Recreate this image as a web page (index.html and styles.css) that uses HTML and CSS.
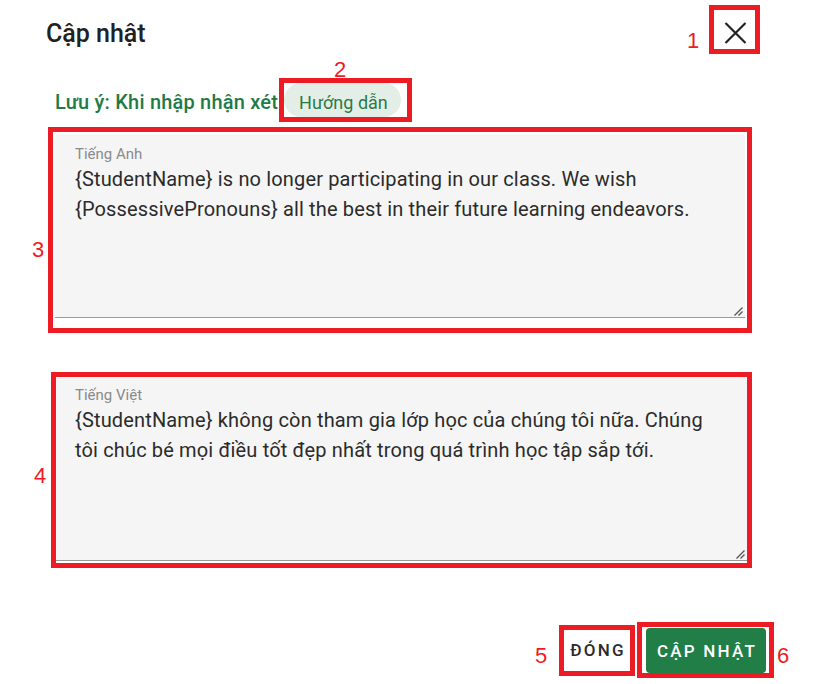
FILE: index.html
```html
<!DOCTYPE html>
<html lang="vi">
<head>
<meta charset="utf-8">
<title>Cập nhật</title>
<link rel="stylesheet" href="styles.css">
</head>
<body>
<div class="dialog">
  <div class="header">
    <h2 class="title">Cập nhật</h2>
    <div class="mark mark-close">
      <span class="num num-1">1</span>
      <button class="close-btn" aria-label="Đóng">
        <svg width="23" height="22" viewBox="0 0 23 22"><path d="M1.5 1 L21.5 21 M21.5 1 L1.5 21" stroke="#222" stroke-width="2.2" fill="none"/></svg>
      </button>
    </div>
  </div>

  <div class="note-row">
    <span class="note">Lưu ý: Khi nhập nhận xét</span>
    <div class="mark mark-chip">
      <span class="num num-2">2</span>
      <span class="chip">Hướng dẫn</span>
    </div>
  </div>

  <div class="mark mark-field mark-en">
    <span class="num num-3">3</span>
    <div class="field">
      <div class="field-label">Tiếng Anh</div>
      <div class="field-text">{StudentName} is no longer participating in our class. We wish {PossessivePronouns} all the best in their future learning endeavors.</div>
      <svg class="grip" width="10" height="10" viewBox="0 0 10 10"><path d="M9.5 1.5 L1.5 9.5 M9.5 5.5 L5.5 9.5" stroke="#555" stroke-width="1.3" fill="none"/></svg>
    </div>
  </div>

  <div class="mark mark-field mark-vi">
    <span class="num num-4">4</span>
    <div class="field">
      <div class="field-label">Tiếng Việt</div>
      <div class="field-text">{StudentName} không còn tham gia lớp học của chúng tôi nữa. Chúng tôi chúc bé mọi điều tốt đẹp nhất trong quá trình học tập sắp tới.</div>
      <svg class="grip" width="10" height="10" viewBox="0 0 10 10"><path d="M9.5 1.5 L1.5 9.5 M9.5 5.5 L5.5 9.5" stroke="#555" stroke-width="1.3" fill="none"/></svg>
    </div>
  </div>

  <div class="actions">
    <div class="mark mark-cancel">
      <span class="num num-5">5</span>
      <button class="btn btn-text">ĐÓNG</button>
    </div>
    <div class="mark mark-submit">
      <span class="num num-6">6</span>
      <button class="btn btn-primary">CẬP NHẬT</button>
    </div>
  </div>
</div>
</body>
</html>
```

FILE: styles.css
```css
* { box-sizing: border-box; }

html, body {
  margin: 0;
  padding: 0;
  background: #ffffff;
}

body {
  font-family: Roboto, "Noto Sans", Arial, sans-serif;
  color: #2b2b2b;
}

.dialog {
  width: 819px;
  height: 684px;
  padding-top: 5px;
  overflow: hidden;
}

/* annotation boxes */
.mark {
  position: relative;
  border: 5px solid #ed1c24;
}

.num {
  position: absolute;
  font-family: "Liberation Sans", Arial, sans-serif;
  font-size: 22px;
  line-height: 22px;
  color: #ed1c24;
}

/* header */
.header {
  height: 49px;
  display: flex;
  justify-content: space-between;
  align-items: flex-start;
  padding: 0 59px 0 46px;
}

.title {
  margin: 15px 0 0 0;
  font-size: 25px;
  line-height: 28px;
  font-weight: 500;
  color: #212121;
}

.mark-close {
  width: 51px;
  height: 49px;
}

.close-btn {
  display: block;
  margin: 0;
  border: 0;
  background: transparent;
  padding: 6px 0 0 10px;
  width: 41px;
  height: 39px;
}

.close-btn svg { display: block; }

.num-1 { left: -27px; top: 20px; }

/* note row */
.note-row {
  display: flex;
  align-items: baseline;
  margin-top: 24px;
  padding-left: 55px;
}

.note {
  font-size: 20px;
  font-weight: 500;
  letter-spacing: 0.2px;
  color: #1f7a45;
  margin-right: 1px;
}

.mark-chip {
  width: 133px;
  height: 44px;
}

.chip {
  display: block;
  width: 117px;
  height: 34px;
  padding: 6px 0 0 15px;
  border-radius: 17px;
  background: #e3efe6;
  color: #2a7a4b;
  font-size: 18px;
  line-height: 28px;
  white-space: nowrap;
}

.num-2 { left: 50px; top: -24px; }

/* fields */
.mark-en {
  margin: 5px 0 0 48px;
  width: 704px;
  height: 206px;
  padding: 2px 2px 10px 2px;
}

.mark-vi {
  margin: 39px 0 0 51px;
  width: 701px;
  height: 196px;
  padding: 0 0 2px 0;
}

.field {
  position: relative;
  height: 100%;
  background: #f5f5f5;
  border-bottom: 1px solid #9a9a9a;
  border-radius: 4px 4px 0 0;
  padding: 11px 24px 0 20px;
}

.mark-vi .field {
  padding-top: 9px;
  padding-left: 19px;
}

.field-label {
  font-size: 15px;
  line-height: 18px;
  color: #8a8a8a;
}

.field-text {
  margin-top: 1px;
  font-size: 20px;
  line-height: 30px;
  letter-spacing: 0.15px;
  color: #2b2b2b;
}

.grip {
  position: absolute;
  right: 2px;
  bottom: 1px;
}

.num-3 { left: -21px; top: 107px; }
.num-4 { left: -22px; top: 88px; }

/* actions */
.actions {
  display: flex;
  justify-content: flex-end;
  align-items: center;
  gap: 2px;
  margin-top: 54px;
  padding-right: 45px;
}

.mark-cancel {
  width: 76px;
  height: 51px;
}

.mark-submit {
  width: 137px;
  height: 56px;
  padding: 1px 3px 0 4px;
}

.btn {
  display: block;
  margin: 0;
  border: 0;
  font-family: Roboto, "Noto Sans", Arial, sans-serif;
  font-size: 17px;
  font-weight: 500;
  letter-spacing: 2.2px;
  cursor: pointer;
  white-space: nowrap;
}

.btn-text {
  width: 66px;
  height: 41px;
  padding: 0 0 0 2px;
  background: transparent;
  color: #2b2b2b;
}

.btn-primary {
  width: 120px;
  height: 45px;
  padding: 0 0 0 2px;
  border-radius: 4px;
  background: #217e47;
  color: #ffffff;
}

.num-5 { left: -29px; top: 15px; }
.num-6 { left: 135px; top: 18px; }
```
